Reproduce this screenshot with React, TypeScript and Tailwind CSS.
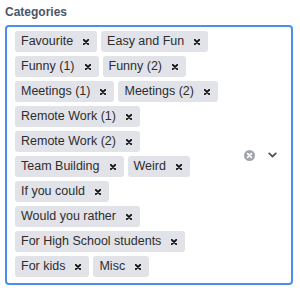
import { ReactNode } from "react";

const categories = [
  "Favourite",
  "Easy and Fun",
  "Funny (1)",
  "Funny (2)",
  "Meetings (1)",
  "Meetings (2)",
  "Remote Work (1)",
  "Remote Work (2)",
  "Team Building",
  "Weird",
  "If you could",
  "Would you rather",
  "For High School students",
  "For kids",
  "Misc",
];

function Cross() {
  return (
    <svg width="6" height="6" viewBox="0 0 6 6" className="block">
      <path d="M0.8 0.8L5.2 5.2M5.2 0.8L0.8 5.2" stroke="#111" strokeWidth="1.9" strokeLinecap="round" />
    </svg>
  );
}

function Chip({ children }: { children: ReactNode }) {
  return (
    <div className="m-[2px] flex h-[21px] items-center rounded-[3px] bg-[#e2e3e8]">
      <span className="pl-[6px] text-[12.5px] leading-[15px] text-[#2d2d2d]">{children}</span>
      <button className="flex h-full items-center pl-[10px] pr-[8px]">
        <Cross />
      </button>
    </div>
  );
}

export default function App() {
  return (
    <div
      className="min-h-[292px] bg-white px-[5px] pt-[4px]"
      style={{ fontFamily: '"Liberation Sans", Arial, sans-serif' }}
    >
      <label className="mb-[5px] block text-[12px] font-bold leading-[16px] text-[#4a5568]">
        Categories
      </label>
      <div className="flex w-[288px] items-center rounded-[4px] border-2 border-[#4b8ef0]">
        <div className="flex flex-1 flex-wrap pb-[4px] pl-[6px] pt-[2px]">
          {categories.map((c) => (
            <Chip key={c}>{c}</Chip>
          ))}
        </div>
        <div className="flex w-[54px] shrink-0 items-center gap-[13px] pl-[7px]">
          <svg width="11" height="11" viewBox="0 0 11 11" className="block">
            <circle cx="5.5" cy="5.5" r="5.5" fill="#a1a5ad" />
            <path d="M3.6 3.6L7.4 7.4M7.4 3.6L3.6 7.4" stroke="#fff" strokeWidth="1.6" strokeLinecap="round" />
          </svg>
          <svg width="9" height="6" viewBox="0 0 9 6" className="block">
            <path d="M1.2 1.4L4.5 4.5L7.8 1.4" fill="none" stroke="#4b5563" strokeWidth="1.8" strokeLinecap="round" strokeLinejoin="round" />
          </svg>
        </div>
      </div>
    </div>
  );
}
